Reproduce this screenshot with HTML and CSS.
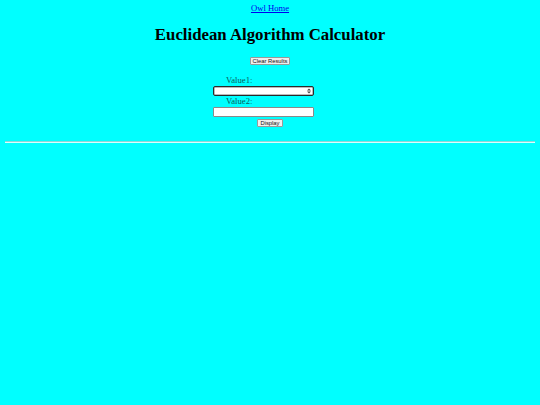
FILE: index.html
```html
<!DOCTYPE html>
<html>
<head>
<meta charset="utf-8">
<title>Euclidean Algorithm Calculator</title>
<link rel="stylesheet" href="styles.css">
</head>
<body>
<div class="top"><a href="#">Owl Home</a></div>
<h1 class="title">Euclidean Algorithm Calculator</h1>
<div class="clear-row"><button class="btn" type="button">Clear Results</button></div>
<form class="calc">
  <label class="lbl" for="v1">Value1:</label>
  <div class="field-wrap">
    <input class="field focused" id="v1" type="number">
    <span class="spin"><svg width="4" height="6" viewBox="0 0 4 6"><path d="M0 2.4 L2 0.4 L4 2.4 Z M0 3.6 L2 5.6 L4 3.6 Z" fill="#444"/></svg></span>
  </div>
  <label class="lbl" for="v2">Value2:</label>
  <div class="field-wrap">
    <input class="field" id="v2" type="text">
  </div>
  <div class="btn-row"><button class="btn" type="button">Display</button></div>
</form>
<hr class="rule">
</body>
</html>
```

FILE: styles.css
```css
html, body {
  background: #00ffff;
}
body {
  margin: 3px 5px;
  font-family: "Liberation Serif", "Times New Roman", serif;
  color: #000;
}
.top {
  text-align: center;
  font-size: 8.64px;
  line-height: 10px;
}
.top a {
  color: #0000ee;
}
.title {
  text-align: center;
  font-size: 16.8px;
  font-weight: bold;
  line-height: 20px;
  margin: 12px 0 12px;
}
.clear-row {
  display: flex;
  justify-content: center;
}
.btn {
  display: block;
  box-sizing: border-box;
  font-family: "Liberation Sans", Arial, sans-serif;
  font-size: 5.8px;
  line-height: 6px;
  white-space: nowrap;
  padding: 0 2px;
  height: 8px;
  background: #efefef;
  color: #111;
  border: 1px solid #9a9a9a;
  border-radius: 1px;
}
.calc {
  display: flex;
  flex-direction: column;
  margin: 10px auto 0;
  width: 114px;
}
.lbl {
  display: block;
  padding-left: 13px;
  font-size: 8.64px;
  line-height: 11px;
  color: #0b5c5c;
}
.field-wrap {
  position: relative;
  width: 101px;
  height: 10px;
}
.field {
  display: block;
  box-sizing: border-box;
  width: 101px;
  height: 10px;
  padding: 0 2px;
  margin: 0;
  background: #fff;
  border: 1px solid #8a8a8a;
  border-radius: 1px;
  font-size: 7px;
  -moz-appearance: textfield;
  appearance: textfield;
}
.field::-webkit-inner-spin-button,
.field::-webkit-outer-spin-button {
  -webkit-appearance: none;
  margin: 0;
}
.field.focused {
  border: 1px solid #2a2a2a;
  box-shadow: inset 0 0 0 0.5px #777;
  border-radius: 2px;
}
.spin {
  position: absolute;
  right: 3px;
  top: 2px;
  display: flex;
}
.btn-row {
  display: flex;
  justify-content: center;
  margin-top: 2px;
}
.rule {
  margin: 14px 0 0;
  border: none;
  border-top: 1px solid #8fd6d6;
  border-bottom: 1px solid #d8ffff;
  height: 0;
}
```
